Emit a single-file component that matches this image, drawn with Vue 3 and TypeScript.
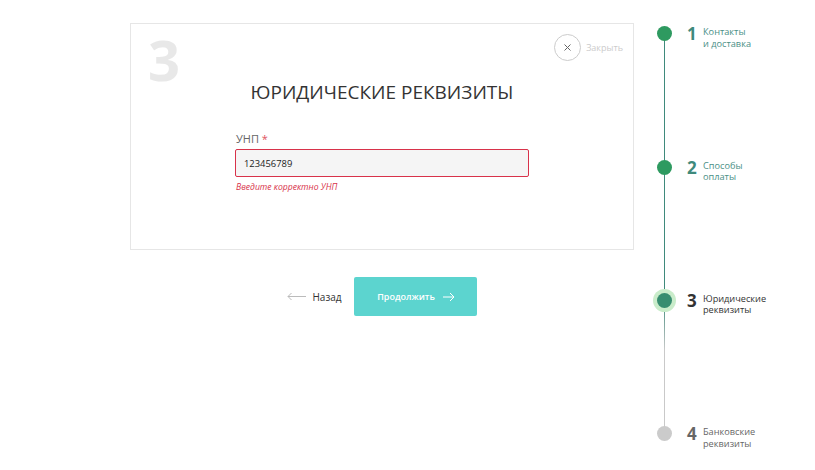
<script setup lang="ts">
interface Step { n: number; lines: [string, string]; state: string }
const steps: Step[] = [
  { n: 1, lines: ['Контакты', 'и доставка'], state: 'done' },
  { n: 2, lines: ['Способы', 'оплаты'], state: 'done' },
  { n: 3, lines: ['Юридические', 'реквизиты'], state: 'active' },
  { n: 4, lines: ['Банковские', 'реквизиты'], state: 'todo' },
]
</script>

<template>
  <div class="page">
    <main class="main">
      <section class="card">
        <div class="big-num">3</div>
        <button class="close" type="button">
          <span class="close-circle">
            <svg width="7" height="7" viewBox="0 0 7 7"><path d="M.5.5l6 6M6.5.5l-6 6" stroke="#666" stroke-width="1" fill="none" /></svg>
          </span>
          <span class="close-text">Закрыть</span>
        </button>
        <h1 class="title">ЮРИДИЧЕСКИЕ РЕКВИЗИТЫ</h1>
        <div class="field">
          <label class="label">УНП <span class="req">*</span></label>
          <input class="input" value="123456789" />
          <div class="err">Введите корректно УНП</div>
        </div>
      </section>
      <div class="actions">
        <a class="back">
          <svg width="19" height="9" viewBox="0 0 19 9"><path d="M19 4.5H1M4.5 1L1 4.5 4.5 8" stroke="#bbb" stroke-width="1" fill="none" /></svg>
          <span>Назад</span>
        </a>
        <button class="next" type="button">
          <span>Продолжить</span>
          <svg width="12" height="10" viewBox="0 0 12 10"><path d="M0 5h11M7 1l4 4-4 4" stroke="#fff" stroke-width="1" fill="none" /></svg>
        </button>
      </div>
    </main>
    <aside class="steps">
      <div v-for="s in steps" :key="s.n" class="step" :class="s.state">
        <div class="dot-col"><span class="dot"></span></div>
        <div class="num">{{ s.n }}</div>
        <div class="text"><div>{{ s.lines[0] }}</div><div>{{ s.lines[1] }}</div></div>
      </div>
    </aside>
  </div>
</template>

<style>
html, body { margin: 0; background: #fff; }
</style>

<style scoped>
.page {
  display: flex;
  width: 815px;
  height: 470px;
  overflow: hidden;
  box-sizing: border-box;
  padding: 23px 0 0 130px;
  font-family: "Open Sans", sans-serif;
  color: #333;
}
.main { width: 504px; flex: none; }
.card {
  position: relative;
  box-sizing: border-box;
  height: 227px;
  border: 1px solid #e6e6e6;
  padding-top: 56px;
}
.big-num {
  position: absolute;
  left: 17px;
  top: -1px;
  font-size: 56px;
  line-height: 72px;
  font-weight: 700;
  color: #e8e8e8;
}
.close {
  position: absolute;
  top: 10px;
  right: 10px;
  display: flex;
  align-items: center;
  gap: 5px;
  padding: 0;
  border: 0;
  background: none;
  font-family: inherit;
}
.close-circle {
  display: flex;
  align-items: center;
  justify-content: center;
  box-sizing: border-box;
  width: 27px;
  height: 27px;
  border: 1px solid #ccc;
  border-radius: 50%;
}
.close-text { font-size: 9px; line-height: 14px; color: #ccc; }
.title {
  margin: 0;
  text-align: center;
  font-size: 19px;
  line-height: 24px;
  font-weight: 400;
  color: #333;
}
.field { width: 294px; margin: 27px 0 0 104px; }
.label {
  display: block;
  padding-left: 1px;
  font-size: 11px;
  line-height: 16px;
  color: #666;
}
.req { color: #e0525f; }
.input {
  display: block;
  box-sizing: border-box;
  width: 100%;
  height: 28px;
  margin-top: 2px;
  padding: 0 8px;
  border: 1px solid #d8324a;
  border-radius: 2px;
  background: #f5f5f5;
  font-family: inherit;
  font-size: 9.4px;
  color: #222;
  outline: none;
}
.err {
  margin-top: 3px;
  padding-left: 1px;
  font-size: 8.6px;
  line-height: 14px;
  font-style: italic;
  color: #d8324a;
}
.actions {
  display: flex;
  align-items: center;
  justify-content: center;
  gap: 12px;
  margin-top: 27px;
}
.back {
  display: flex;
  align-items: center;
  gap: 6px;
  font-size: 10px;
  color: #333;
}
.next {
  display: flex;
  align-items: center;
  justify-content: center;
  gap: 8px;
  box-sizing: border-box;
  width: 123px;
  height: 39px;
  padding: 0 0 0 2px;
  border: 0;
  border-radius: 2px;
  background: #5cd4cf;
  color: #fff;
  font-family: inherit;
  font-size: 9px;
  font-weight: 600;
}
.steps { margin: 2.25px 0 0 20px; }
.step {
  display: flex;
  align-items: flex-start;
  height: 133.3px;
}
.dot-col {
  position: relative;
  width: 22px;
  height: 100%;
  flex: none;
}
.dot-col::before {
  content: "";
  position: absolute;
  left: 10px;
  top: 8px;
  width: 1px;
  height: 133.4px;
  background: #3f8a7c;
}
.step.active .dot-col::before {
  background: linear-gradient(#3f8a7c 0, #c9c9c9 50px);
}
.step.todo .dot-col::before { display: none; }
.dot {
  position: absolute;
  left: 3px;
  top: 1px;
  width: 15px;
  height: 15px;
  border-radius: 50%;
  background: #2e9a60;
}
.step.active .dot {
  background: #378d70;
  box-shadow: 0 0 0 4px #c9ecca;
}
.step.todo .dot { background: #cbcbcb; }
.num {
  width: 16px;
  margin-left: 11px;
  font-size: 17px;
  line-height: 18px;
  font-weight: 700;
  color: #3f8a7c;
}
.step.active .num { color: #333; }
.step.todo .num { color: #666; }
.text {
  margin-top: 1px;
  font-size: 9.2px;
  line-height: 11.5px;
  color: #4a8f86;
}
.step.active .text { color: #333; }
.step.todo .text { color: #666; }
</style>
